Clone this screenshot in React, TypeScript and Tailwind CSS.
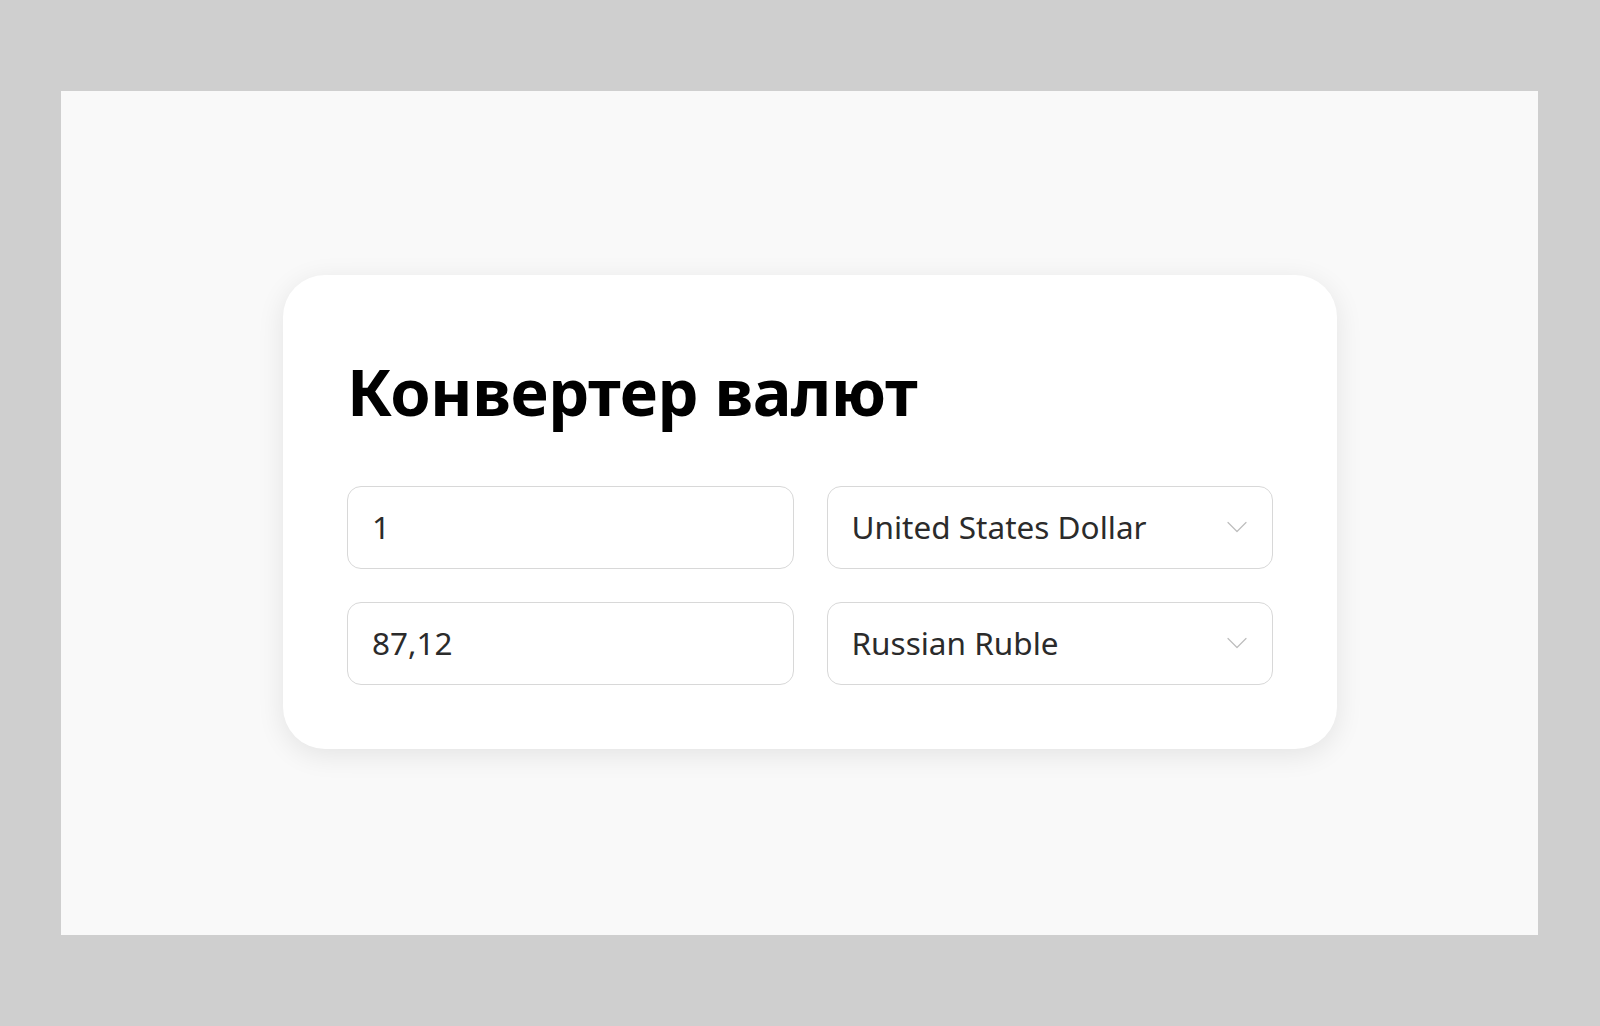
import React from "react";

function Chevron() {
  return (
    <svg width="22" height="14" viewBox="0 0 22 14" fill="none" className="shrink-0">
      <path d="M2 2.5 L11 11.5 L20 2.5" stroke="#bdbdbd" strokeWidth="1.2" strokeLinecap="round" strokeLinejoin="round" />
    </svg>
  );
}

function Field({ value }: { value: string }) {
  return (
    <div className="h-[83px] rounded-[14px] border-[1.5px] border-[#d8d8d8] bg-white flex items-center pl-[24px] text-[31.5px] text-[#2b2b2b]">
      {value}
    </div>
  );
}

function Select({ value }: { value: string }) {
  return (
    <div className="h-[83px] rounded-[14px] border-[1.5px] border-[#d8d8d8] bg-white flex items-center justify-between pl-[24px] pr-[24px] text-[31.5px] text-[#2b2b2b]">
      <span>{value}</span>
      <Chevron />
    </div>
  );
}

export default function App() {
  return (
    <div
      className="w-[1600px] h-[1026px] bg-[#cfcfcf] pt-[91px] pb-[91px] pl-[61px] pr-[62px]"
      style={{ fontFamily: '"Noto Sans", "Open Sans", sans-serif' }}
    >
      <div className="w-full h-full bg-[#f9f9f9] flex items-center justify-center pl-[21px] pb-[3px]">
        <div className="w-[1054px] rounded-[42px] bg-white shadow-[0_6px_28px_rgba(0,0,0,0.09)] px-[64px] pt-[84px] pb-[64px]">
          <h1 className="text-[65px] font-bold text-black leading-[1] mb-[62px] tracking-[-0.5px]">
            Конвертер валют
          </h1>
          <div className="grid grid-cols-2 gap-x-[33px] gap-y-[33px]">
            <Field value="1" />
            <Select value="United States Dollar" />
            <Field value="87,12" />
            <Select value="Russian Ruble" />
          </div>
        </div>
      </div>
    </div>
  );
}
